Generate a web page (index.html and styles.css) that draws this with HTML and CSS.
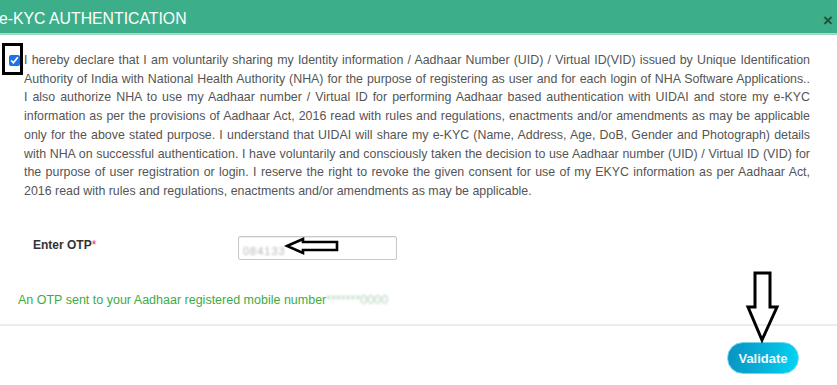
FILE: index.html
```html
<!DOCTYPE html>
<html lang="en">
<head>
<meta charset="utf-8">
<title>e-KYC Authentication</title>
<link rel="stylesheet" href="styles.css">
</head>
<body>
<div class="modal">
  <div class="modal-header">
    <h4 class="modal-title">e-KYC AUTHENTICATION</h4>
    <span class="close">×</span>
  </div>
  <div class="modal-body">
    <div class="consent">
      <input type="checkbox" class="consent-check" checked>
      <p class="consent-text">
        <span class="ln">I hereby declare that I am voluntarily sharing my Identity information / Aadhaar Number (UID) / Virtual ID(VID) issued by Unique Identification</span>
        <span class="ln">Authority of India with National Health Authority (NHA) for the purpose of registering as user and for each login of NHA Software Applications..</span>
        <span class="ln">I also authorize NHA to use my Aadhaar number / Virtual ID for performing Aadhaar based authentication with UIDAI and store my e-KYC</span>
        <span class="ln">information as per the provisions of Aadhaar Act, 2016 read with rules and regulations, enactments and/or amendments as may be applicable</span>
        <span class="ln">only for the above stated purpose. I understand that UIDAI will share my e-KYC (Name, Address, Age, DoB, Gender and Photograph) details</span>
        <span class="ln">with NHA on successful authentication. I have voluntarily and consciously taken the decision to use Aadhaar number (UID) / Virtual ID (VID) for</span>
        <span class="ln">the purpose of user registration or login. I reserve the right to revoke the given consent for use of my EKYC information as per Aadhaar Act,</span>
        <span class="ln last">2016 read with rules and regulations, enactments and/or amendments as may be applicable.</span>
      </p>
    </div>
    <div class="otp-row">
      <label class="otp-label">Enter OTP<span class="req">*</span></label>
      <div class="otp-input"><span class="otp-value">084133</span></div>
    </div>
    <p class="otp-msg">An OTP sent to your Aadhaar registered mobile number<span class="masked">*******0000</span></p>
  </div>
  <div class="modal-footer">
    <button class="btn-validate" type="button">Validate</button>
  </div>

  <div class="mark-box"></div>
  <svg class="mark-left" width="58" height="21" viewBox="0 0 58 21">
    <polygon points="3,10 19,3 19,6 53,6 53,14 19,14 19,17" fill="none" stroke="#000" stroke-width="2.6" stroke-linejoin="miter"/>
  </svg>
  <svg class="mark-down" width="38" height="74" viewBox="0 0 38 74">
    <polygon points="11,3 26,3 26,37 33,37 18,70 4,37 11,37" fill="none" stroke="#000" stroke-width="3" stroke-linejoin="miter"/>
  </svg>
</div>
</body>
</html>
```

FILE: styles.css
```css
* { box-sizing: border-box; }

html, body {
  margin: 0;
  padding: 0;
  background: #fff;
}

body {
  font-family: "Liberation Sans", Arial, sans-serif;
  color: #555;
}

.modal {
  position: relative;
  width: 837px;
  height: 385px;
  overflow: hidden;
  background: #fff;
}

.modal-header {
  height: 35px;
  background: #3dae8a;
  border-bottom: 2px solid #9fdac5;
  display: flex;
  justify-content: space-between;
  align-items: flex-start;
  padding: 10px 4px 0 0;
}

.modal-title {
  margin: 0 0 0 -1px;
  font-size: 15.8px;
  font-weight: normal;
  color: #fff;
  line-height: 1.15;
}

.close {
  font-size: 17px;
  font-weight: bold;
  line-height: 1.15;
  color: rgba(0, 0, 0, 0.55);
  margin-top: 1px;
}

.modal-body {
  padding: 16px 0 0 0;
}

.consent {
  display: flex;
  align-items: flex-start;
  padding-left: 9px;
}

.consent-check {
  width: 11px;
  height: 11px;
  margin: 4px 4px 0 0;
  flex: none;
  accent-color: #1a73e8;
}

.consent-text {
  margin: 0;
  flex: none;
  width: 786px;
  font-size: 12.4px;
  line-height: 18.7px;
  color: #555;
}

.ln {
  display: block;
  text-align: justify;
  text-align-last: justify;
  white-space: nowrap;
}

.ln.last {
  text-align-last: left;
}

.otp-row {
  display: flex;
  align-items: flex-start;
  margin-top: 35px;
  padding-left: 33px;
}

.otp-label {
  width: 205px;
  font-size: 12px;
  font-weight: bold;
  line-height: 18.7px;
  color: #333;
}

.req {
  color: #e23b3b;
  font-weight: normal;
}

.otp-input {
  width: 159px;
  height: 24px;
  border: 1px solid #c8c8c8;
  border-radius: 2px;
  box-shadow: inset 0 1px 1px rgba(0, 0, 0, 0.08);
  padding: 4px 0 0 4px;
}

.otp-value {
  font-size: 11px;
  color: #b5b5b5;
  letter-spacing: 1px;
  filter: blur(1.3px);
  display: inline-block;
}

.otp-msg {
  margin: 31px 0 0;
  padding-left: 18px;
  font-size: 12.5px;
  line-height: 18.7px;
  color: #3eab45;
}

.masked {
  color: #b3d2b7;
  filter: blur(0.9px);
  display: inline-block;
}

.modal-footer {
  margin-top: 15px;
  border-top: 2px solid #ececec;
  padding: 16px 38px 0 0;
  display: flex;
  justify-content: flex-end;
}

.btn-validate {
  width: 72px;
  height: 32px;
  border: 1px solid #6fd8ee;
  border-radius: 16px;
  background: linear-gradient(100deg, #0a92c2 0%, #07b3dc 55%, #00d6f3 100%);
  color: #eef9fd;
  font-family: "Liberation Sans", Arial, sans-serif;
  font-size: 13px;
  font-weight: bold;
  padding: 0;
}

.mark-box {
  position: absolute;
  left: 2px;
  top: 43px;
  width: 21px;
  height: 32px;
  border: 3px solid #000;
}

.mark-left {
  position: absolute;
  left: 284px;
  top: 236px;
}

.mark-down {
  position: absolute;
  left: 744px;
  top: 270px;
}
```
